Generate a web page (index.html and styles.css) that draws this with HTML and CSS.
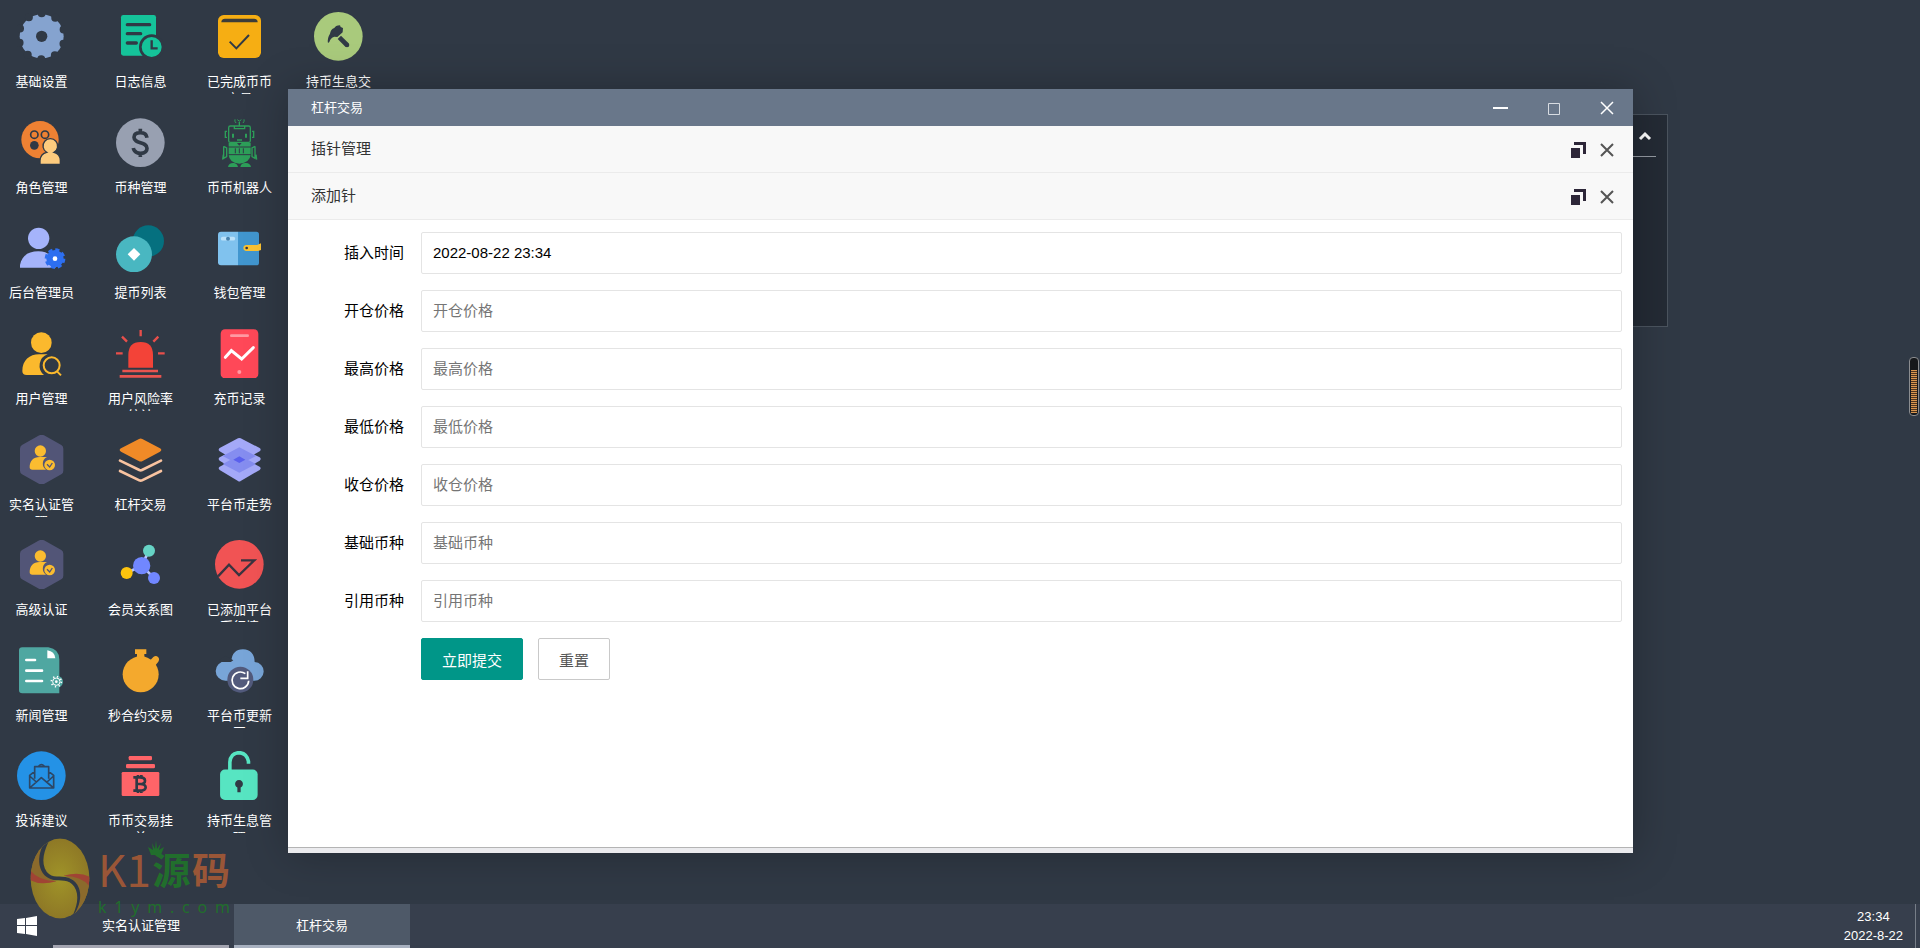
FILE: index.html
```html
<!DOCTYPE html>
<html lang="zh-CN">
<head>
<meta charset="utf-8">
<title>杠杆交易</title>
<link rel="stylesheet" href="styles.css">
</head>
<body>
<main class="desktop">
  <nav class="shortcuts">
    <a class="shortcut" href="#"><svg class="icon" viewBox="51 36 147 147"><circle cx="125" cy="109" r="66" fill="#85a3cf"/><circle cx="125" cy="109" r="69" fill="none" stroke="#303945" stroke-width="24" stroke-linecap="round" stroke-dasharray="0 43.354" transform="rotate(-90 125 109)"/><circle cx="125" cy="109" r="17" fill="#303945"/></svg><span class="caption">基础设置</span></a>
    <a class="shortcut" href="#"><svg class="icon" viewBox="51 353 147 147"><circle cx="120" cy="418" r="56" fill="#ee8133"/><g fill="none" stroke="#303945" stroke-width="5"><circle cx="103" cy="403" r="11"/><circle cx="135" cy="403" r="11"/></g><circle cx="103" cy="435" r="13" fill="#303945"/><path d="M120 492v-12q2-20 20-24a22 22 0 1 1 22 0q18 4 19 24v12z" fill="#fdcb7e" stroke="#303945" stroke-width="4"/></svg><span class="caption">角色管理</span></a>
    <a class="shortcut" href="#"><svg class="icon" viewBox="51 40 147 147"><circle cx="116" cy="86" r="32" fill="#a5b4fb"/><path d="M60 174v-8c5-28 25-41 55-41 28 0 45 14 52 49z" fill="#a5b4fb"/><circle cx="165" cy="147" r="26" fill="#2d6ff0"/><circle cx="165" cy="147" r="26" fill="none" stroke="#2d6ff0" stroke-width="10" stroke-dasharray="12 8.42"/><circle cx="165" cy="147" r="7" fill="#fff"/></svg><span class="caption">后台管理员</span></a>
    <a class="shortcut" href="#"><svg class="icon" viewBox="51 356 147 147"><circle cx="124" cy="397" r="31" fill="#fbb92d"/><path d="M67 482c0-32 22-50 50-50h26a36 36 0 0 0-11 62H80q-13 0-13-12z" fill="#fbb92d"/><circle cx="155" cy="465" r="24" fill="none" stroke="#fbb92d" stroke-width="6"/><path d="M171 483l12 12" stroke="#fbb92d" stroke-width="6"/></svg><span class="caption">用户管理</span></a>
    <a class="shortcut" href="#"><svg class="icon" viewBox="51 43 147 147"><path id="hex" d="M118 44q7-4 14 0l52 29q6 4 6 11v66q0 7-6 11l-52 29q-7 4-14 0l-52-29q-6-4-6-11V84q0-7 6-11z" fill="#525577"/><circle cx="121" cy="91" r="17" fill="#fbbc30"/><path d="M89 140c0-20 11-31 30-31h22a22 22 0 0 0-3 38H97q-8 0-8-7z" fill="#fbbc30"/><circle cx="149" cy="133" r="16" fill="#fbbc30"/><path d="M141 131l8 8 8-12" fill="none" stroke="#525577" stroke-width="4"/></svg><span class="caption">实名认证管理</span></a>
    <a class="shortcut" href="#"><svg class="icon" viewBox="51 43 147 147"><use href="#hex"/><circle cx="121" cy="91" r="17" fill="#fbbc30"/><path d="M89 140c0-20 11-31 30-31h22a22 22 0 0 0-3 38H97q-8 0-8-7z" fill="#fbbc30"/><circle cx="149" cy="133" r="16" fill="#fbbc30"/><path d="M141 131l8 8 8-12" fill="none" stroke="#525577" stroke-width="4"/></svg><span class="caption">高级认证</span></a>
    <a class="shortcut" href="#"><svg class="icon" viewBox="51 47 147 147"><path d="M67 51h78q33 5 33 37v101H67q-10 0-10-10V61q0-10 10-10z" fill="#4fa7a1"/><path d="M142 60q22 3 24 24h-24z" fill="#fff"/><path d="M79 89h26M79 121h47M79 152h47" stroke="#fff" stroke-width="8" stroke-linecap="round"/><circle cx="171" cy="154" r="18" fill="#4fa7a1"/><circle cx="169" cy="154" r="11" fill="none" stroke="#fff" stroke-width="3"/><circle cx="169" cy="154" r="15" fill="none" stroke="#fff" stroke-width="5" stroke-dasharray="4 7.78"/><circle cx="169" cy="154" r="4" fill="#fff"/></svg><span class="caption">新闻管理</span></a>
    <a class="shortcut" href="#"><svg class="icon" viewBox="51 363 147 147"><circle cx="124" cy="437" r="73" fill="#2492e6"/><g fill="none" stroke="#2d4765" stroke-width="5" stroke-linejoin="round"><path d="M104 424l-15 12v38h72v-38l-15-12M104 446v-36h42v36M89 474l35-31 37 31M89 438l20 18M161 438l-20 18"/><path d="M116 409q8-10 17 0"/></g></svg><span class="caption">投诉建议</span></a>

    <a class="shortcut" href="#"><svg class="icon" viewBox="348 36 147 147"><rect x="363" y="45" width="105" height="122" rx="7" fill="#15c39a"/><path d="M382 74h67M382 101h40M382 129h27" stroke="#303945" stroke-width="10" stroke-linecap="round"/><circle cx="455" cy="141" r="34" fill="#15c39a" stroke="#303945" stroke-width="8"/><path d="M455 121v24h18" fill="none" stroke="#303945" stroke-width="7"/></svg><span class="caption">日志信息</span></a>
    <a class="shortcut" href="#"><svg class="icon" viewBox="345 353 147 147"><circle cx="418" cy="427" r="73" fill="#98a0b1"/><path d="M438 412q-2-15-20-15-19 0-19 14c0 21 39 12 39 33 0 10-8 15-20 15-19 0-21-16-21-16M418 385v14M418 457v13" fill="none" stroke="#303945" stroke-width="11"/></svg><span class="caption">币种管理</span></a>
    <a class="shortcut" href="#"><svg class="icon" viewBox="348 40 147 147"><circle cx="445" cy="94" r="47" fill="#05707f"/><circle cx="402" cy="134" r="54" fill="#49b7c1"/><path d="M402 115l19 19-19 19-19-19z" fill="#fff"/></svg><span class="caption">提币列表</span></a>
    <a class="shortcut" href="#"><svg class="icon" viewBox="348 356 147 147"><path d="M385 472v-38q0-39 37-39t37 39v38z" fill="#f34338"/><path d="M422 359v19M366 379l15 15M475 379l-15 15M348 429h20M474 429h20" stroke="#e84f4b" stroke-width="7"/><path d="M367 482h107M359 498h125" stroke="#e9544f" stroke-width="8"/></svg><span class="caption">用户风险率统计</span></a>
    <a class="shortcut" href="#"><svg class="icon" viewBox="348 43 147 147"><path d="M417 55q5-3 10 0l53 28q8 5 0 10l-52 28q-6 3-12 0l-53-28q-8-5 0-10z" fill="#f08a27"/><path d="M360 120l58 28q4 2 8 0l57-28M360 151l58 28q4 2 8 0l57-28" fill="none" stroke="#f8c3a0" stroke-width="8" stroke-linecap="round"/></svg><span class="caption">杠杆交易</span></a>
    <a class="shortcut" href="#"><svg class="icon" viewBox="348 360 147 147"><path d="M380 459l45-22 22-45M425 437l37 37" fill="none" stroke="#b8c5ff" stroke-width="8"/><circle cx="447" cy="392" r="18" fill="#66d3c5"/><circle cx="425" cy="437" r="26" fill="#7187ff"/><circle cx="380" cy="459" r="18" fill="#fdc40e"/><circle cx="462" cy="474" r="18" fill="#7187ff"/></svg><span class="caption">会员关系图</span></a>
    <a class="shortcut" href="#"><svg class="icon" viewBox="348 47 147 147"><circle cx="422" cy="132" r="54" fill="#f4a92d"/><path d="M405 57h34v14h-6v14h-22V71h-6zM448 93l12-13q8-6 14 0 6 6 1 14l-11 14z" fill="#f4a92d"/></svg><span class="caption">秒合约交易</span></a>
    <a class="shortcut" href="#"><svg class="icon" viewBox="348 363 147 147"><g fill="#ff6468"><rect x="386" y="378" width="70" height="13" rx="4"/><rect x="378" y="402" width="87" height="13" rx="4"/><rect x="365" y="426" width="113" height="72" rx="4"/></g><path d="M400 442h20q15 0 15 10t-15 10h-11M420 462q17 0 17 10t-17 10h-20M410 442v40M414 435v7M424 435v7M414 484v5M424 484v5" fill="none" stroke="#303945" stroke-width="8"/></svg><span class="caption">币币交易挂单</span></a>

    <a class="shortcut" href="#"><svg class="icon" viewBox="645 36 147 147"><rect x="654" y="45" width="129" height="129" rx="17" fill="#f6ae13"/><path d="M664 67q0-11 11-11h87q11 0 11 11z" fill="#3c3d39"/><path d="M689 125l20 20 38-40" fill="none" stroke="#303945" stroke-width="6"/></svg><span class="caption">已完成币币交易</span></a>
    <a class="shortcut" href="#"><svg class="icon" viewBox="645 353 147 147"><g fill="none" stroke="#2d9f59" stroke-width="4"><rect x="686" y="377" width="65" height="49" rx="5"/><path d="M703 377v8h31v-8M718 377v-12M681 393h-5v18h5M756 393h5v18h-5M711 419h15M671 438l9 5v26l-9 5v-36M765 438l-9 5v26l9 5v-36M670 463l-2 15M768 463l2 15"/></g><path d="M705 357q-2 6 3 11M732 357q2 6-3 11M712 358q6 9 12 0" fill="none" stroke="#2d9f59" stroke-width="3"/><path d="M699 400v12M738 400v12" stroke="#2d9f59" stroke-width="6"/><path d="M686 428h25l7 8 7-8h27v35q-2 23-34 27-31-4-32-27zM684 500q2-13 18-12 10 2 12 12zM721 500q2-13 17-12 13 1 15 12z" fill="#2d9f59"/><path d="M684 440h69M684 463h69M706 444v15M718 444v15M730 444v15" stroke="#303945" stroke-width="3"/></svg><span class="caption">币币机器人</span></a>
    <a class="shortcut" href="#"><svg class="icon" viewBox="645 40 147 147"><path d="M663 66h51v101h-51q-9 0-9-9V75q0-9 9-9z" fill="#80c2ee"/><path d="M714 66h55q8 0 8 8v85q0 8-8 8h-55z" fill="#4196cf"/><path d="M783 101v20l-9 3h-35q-9-1-9-9t9-9h32z" fill="#fac232"/><circle cx="740" cy="115" r="4" fill="#334"/><path d="M668 87h32" stroke="#bce2fa" stroke-width="11" stroke-linecap="round"/><circle cx="684" cy="87" r="6" fill="#4782ae"/></svg><span class="caption">钱包管理</span></a>
    <a class="shortcut" href="#"><svg class="icon" viewBox="645 356 147 147"><rect x="662" y="357" width="113" height="147" rx="13" fill="#ff4858"/><path d="M694 376h49" stroke="#ff99a2" stroke-width="8" stroke-linecap="round"/><path d="M676 441l18-20 31 25 35-34" fill="none" stroke="#fff" stroke-width="9" stroke-linecap="round"/><circle cx="718" cy="485" r="6" fill="#ff99a2"/></svg><span class="caption">充币记录</span></a>
    <a class="shortcut" href="#"><svg class="icon" viewBox="645 43 147 147"><g fill="#a4a9f8"><path id="sheet" d="M714 109q4-2 8 0l57 29q6 5 0 10l-57 33q-4 3-8 0l-55-33q-6-5 0-10z"/><use href="#sheet" y="-28"/><use href="#sheet" y="-56"/></g><path d="M718 80l50 26-50 26-50-26zM718 104l50 26-50 26-50-26z" fill="#858df0"/><path d="M718 107l18 10-18 10-18-10z" fill="#5a60ed"/></svg><span class="caption">平台币走势</span></a>
    <a class="shortcut" href="#"><svg class="icon" viewBox="645 360 147 147"><circle cx="718" cy="433" r="73" fill="#f15354"/><path d="M654 469l33-35 30 31 46-44h-40" fill="none" stroke="#3a3440" stroke-width="7"/></svg><span class="caption">已添加平台币行情</span></a>
    <a class="shortcut" href="#"><svg class="icon" viewBox="645 47 147 147"><path d="M676 151a29 29 0 0 1 0-58h18q2-35 35-36 34 2 35 38a28 28 0 0 1-2 56z" fill="#78a5d8"/><path d="M658 88l18-12 24 14-8 5h-34z" fill="#303945"/><circle cx="721" cy="148" r="39" fill="#525a7c"/><path d="M736 130a25 25 0 1 0 10 21M743 123v21h-22" fill="none" stroke="#fff" stroke-width="5"/></svg><span class="caption">平台币更新图</span></a>
    <a class="shortcut" href="#"><svg class="icon" viewBox="645 363 147 150"><rect x="659" y="420" width="115" height="93" rx="15" fill="#57e5c2"/><path d="M689 424v-27q2-28 29-29 23 2 28 27v7" fill="none" stroke="#57e5c2" stroke-width="11"/><path d="M712 489v-14a12 12 0 1 1 10 0v14z" fill="#303945"/></svg><span class="caption">持币生息管理</span></a>

    <a class="shortcut" href="#"><svg class="icon" viewBox="942 36 147 147"><circle cx="1015" cy="109" r="73" fill="#a9ca7c"/><path d="M984 129q-3-14 6-28 2-13 13-17 3-7 17-8l2 5 7 3-1 13-16 14-9-1q-12 4-15 16z" fill="#303945"/><path d="M1018 112l23 23" stroke="#303945" stroke-width="14"/><circle cx="1041" cy="135" r="7" fill="#303945"/></svg><span class="caption">持币生息交易</span></a>
  </nav>

  <section class="side-panel"><button class="collapse" aria-label="收起"><svg viewBox="0 0 14 10"><path d="M2 8l5-5 5 5" fill="none" stroke="#fff" stroke-width="3"/></svg></button></section>

  <section class="window">
    <header class="titlebar">
      <h1 class="title">杠杆交易</h1>
      <div class="controls">
        <button class="control" aria-label="最小化"><svg viewBox="0 0 16 16"><path d="M0 8h15" stroke="#fff" stroke-width="2"/></svg></button>
        <button class="control" aria-label="最大化"><svg viewBox="0 0 16 16"><path d="M2.500 3.500h11v11h-11z" fill="none" stroke="#d8dce2"/></svg></button>
        <button class="control" aria-label="关闭"><svg viewBox="0 0 16 16"><path d="M2 2l12 12M14 2L2 14" stroke="#fff" stroke-width="1.500"/></svg></button>
      </div>
    </header>
    <div class="layer">
      <h2 class="layer-title">插针管理</h2>
      <button class="tool" aria-label="还原"><svg viewBox="0 0 16 16"><path d="M4 0h12v12h-3V3H4zM1 6h9v10H1z" fill="#2d2638"/></svg></button>
      <button class="tool" aria-label="关闭"><svg viewBox="0 0 16 16"><path d="M2 2l12 12M14 2L2 14" stroke="#555" stroke-width="2"/></svg></button>
    </div>
    <div class="layer">
      <h2 class="layer-title">添加针</h2>
      <button class="tool" aria-label="还原"><svg viewBox="0 0 16 16"><path d="M4 0h12v12h-3V3H4zM1 6h9v10H1z" fill="#2d2638"/></svg></button>
      <button class="tool" aria-label="关闭"><svg viewBox="0 0 16 16"><path d="M2 2l12 12M14 2L2 14" stroke="#555" stroke-width="2"/></svg></button>
    </div>
    <form class="form">
      <div class="row"><label class="label" for="time">插入时间</label><input class="field" id="time" type="text" value="2022-08-22 23:34"></div>
      <div class="row"><label class="label" for="open">开仓价格</label><input class="field" id="open" type="text" placeholder="开仓价格"></div>
      <div class="row"><label class="label" for="high">最高价格</label><input class="field" id="high" type="text" placeholder="最高价格"></div>
      <div class="row"><label class="label" for="low">最低价格</label><input class="field" id="low" type="text" placeholder="最低价格"></div>
      <div class="row"><label class="label" for="close">收仓价格</label><input class="field" id="close" type="text" placeholder="收仓价格"></div>
      <div class="row"><label class="label" for="base">基础币种</label><input class="field" id="base" type="text" placeholder="基础币种"></div>
      <div class="row"><label class="label" for="quote">引用币种</label><input class="field" id="quote" type="text" placeholder="引用币种"></div>
      <div class="actions"><button class="button primary" type="submit">立即提交</button><button class="button" type="reset">重置</button></div>
    </form>
  </section>

  <div class="gauge"><div class="gauge-level"></div></div>
</main>

<footer class="taskbar">
  <button class="start" aria-label="开始"><svg viewBox="0 0 20 20"><path d="M0 3l8-1v7H0zM9 2l11-2v9H9zM0 10h8v8l-8-1zM9 10h11v10L9 18z" fill="#fff"/></svg></button>
  <button class="task">实名认证管理</button>
  <button class="task active">杠杆交易</button>
  <time class="clock"><span>23:34</span><span>2022-8-22</span></time>
</footer>

<aside class="watermark">
  <svg class="emblem" viewBox="88 52 182 244">
    <defs>
      <clipPath id="egg"><ellipse cx="179" cy="174" rx="89" ry="121"/></clipPath>
      <radialGradient id="gold"><stop offset="0" stop-color="#a09428"/><stop offset="1" stop-color="#8e7826"/></radialGradient>
    </defs>
    <g clip-path="url(#egg)">
      <path d="M88 52h182v244H88z" fill="url(#gold)"/>
      <path d="M143 60C95 90 84 130 88 168q34 22 80 14-52-14-50-64 2-32 26-58z" fill="#8b6a2c"/>
      <path d="M215 288c48-30 59-70 55-108q-34-22-80-14 52 14 50 64-2 32-26 58z" fill="#8b6a2c"/>
      <path d="M89 150q26 32 79 32-46 14-79-3z" fill="#a04434"/>
      <path d="M269 198q-26-32-79-32 46-14 79 3z" fill="#a04434"/>
      <path d="M142 52c-36 40-38 110 14 126 26 5 49-3 66 20 18 28 8 64-9 98 34-40 42-104-8-124-26-9-49 3-66-18-20-28-8-68 11-102z" fill="#303945"/>
    </g>
  </svg>
  <div class="brand">
    <div class="brand-name"><span class="latin">K1</span><span class="yuan">源</span><span class="ma">码</span></div>
    <div class="brand-site"><span>k</span><span>1</span><span>y</span><span>m</span><span>.</span><span>c</span><span>o</span><span>m</span></div>
  </div>
  <svg class="crown" viewBox="0 0 16 16"><path d="M3 15L0 7l5 3-1-7 3 6 1-9 1 9 4-6-2 7 5-3-3 8z" fill="#216e2c"/></svg>
</aside>
</body>
</html>
```
FILE: styles.css
```css
* { box-sizing: border-box; }
body {
  margin: 0;
  height: 100vh;
  display: flex;
  flex-direction: column;
  overflow: hidden;
  background: #303945;
  color: #fff;
  font-family: "Liberation Sans", "Noto Sans CJK SC", sans-serif;
  font-size: 13px;
}
button {
  margin: 0;
  padding: 0;
  border: 0;
  background: none;
  color: inherit;
  font: inherit;
}
h1, h2 { margin: 0; font-weight: 400; }
svg { display: block; }

.desktop { position: relative; flex: 1; min-height: 0; }
.shortcuts {
  height: 100%;
  padding-bottom: 59px;
  display: grid;
  grid-auto-flow: column;
  grid-template-rows: repeat(8, minmax(0, 1fr));
  grid-auto-columns: 83px;
  column-gap: 16px;
}
.shortcut {
  display: flex;
  flex-direction: column;
  align-items: center;
  gap: 12px;
  padding-top: 12px;
  color: #fff;
  text-decoration: none;
}
.icon { width: 49px; height: 49px; flex: none; }
.caption {
  width: 70px;
  height: 21px;
  overflow: hidden;
  line-height: 17px;
  text-align: center;
}

.side-panel {
  position: absolute;
  top: 114px;
  right: 252px;
  width: 300px;
  height: 213px;
  padding: 0 11px;
  border: 1px solid #4b545f;
  background: #242b35;
}
.collapse {
  display: flex;
  align-items: center;
  justify-content: flex-end;
  width: 100%;
  height: 42px;
  padding-right: 4px;
  border-bottom: 1px solid #959ba3;
}
.collapse svg { width: 14px; height: 10px; }

.window {
  position: absolute;
  top: 89px;
  right: 287px;
  bottom: 51px;
  left: 288px;
  display: flex;
  flex-direction: column;
  background: #fff;
  border-bottom: 5px solid #ebebee;
  box-shadow: 1px 1px 40px rgba(0, 0, 0, 0.25);
}
.titlebar {
  display: flex;
  align-items: center;
  justify-content: space-between;
  height: 37px;
  padding-left: 23px;
  background: #69778a;
}
.title { padding-bottom: 2px; font-size: 13px; }
.controls { display: flex; }
.control { width: 53px; height: 37px; display: grid; place-items: center; }
.control svg { width: 16px; height: 16px; }
.layer {
  display: flex;
  align-items: center;
  height: 47px;
  padding: 0 18px 0 23px;
  border-bottom: 1px solid #ebebeb;
  background: #f8f8f8;
  color: #333;
}
.layer-title { flex: 1; padding-bottom: 3px; font-size: 15px; }
.tool { margin-left: 13px; padding-top: 2px; }
.tool svg { width: 16px; height: 16px; }

.form {
  flex: 1;
  display: flex;
  flex-direction: column;
  gap: 16px;
  padding: 12px 11px 0 0;
  border-bottom: 1px solid #b4b4b4;
  color: #000;
  font-size: 15px;
}
.row { display: flex; align-items: center; }
.label { width: 133px; padding: 0 17px 3px 0; text-align: right; }
.field {
  flex: 1;
  height: 42px;
  padding: 0 11px 2px;
  border: 1px solid #e4e4e4;
  border-radius: 2px;
  background: #fff;
  color: #000;
  font: inherit;
}
.field::placeholder { color: #757575; }
.actions { display: flex; gap: 15px; padding-left: 133px; }
.button {
  height: 42px;
  padding: 0 20px;
  border: 1px solid #c9c9c9;
  border-radius: 2px;
  color: #555;
}
.primary { border-color: #009688; background: #009688; color: #fff; }

.gauge {
  position: absolute;
  top: 357px;
  right: 1px;
  width: 10px;
  height: 59px;
  padding: 12px 1px 2px;
  border: 1px solid #8b8d90;
  border-radius: 4px;
  background: #16181b;
}
.gauge-level {
  height: 100%;
  background: repeating-linear-gradient(#d9964f 0 1px, #4d3520 1px 2px);
}

.taskbar {
  display: flex;
  gap: 5px;
  height: 44px;
  background: #373f4d;
}
.start { width: 48px; padding-left: 17px; }
.start svg { width: 20px; height: 20px; }
.task { width: 176px; border-bottom: 3px solid #a3a4b0; }
.active { background: #4e5968; border-color: #a8b1c0; }
.clock {
  display: flex;
  flex-direction: column;
  align-items: center;
  justify-content: center;
  margin: 0 4px 0 auto;
  padding: 0 12px 0 11px;
  border-right: 1px solid #777e88;
  line-height: 19px;
}

.watermark {
  position: absolute;
  left: 30px;
  bottom: 29px;
  display: flex;
  gap: 8px;
  pointer-events: none;
}
.emblem { width: 60px; height: 81px; }
.brand { width: 132px; height: 81px; }
.brand-name {
  display: flex;
  align-items: center;
  justify-content: space-between;
  height: 60px;
  font-family: "Noto Sans CJK SC", sans-serif;
  font-size: 38px;
  line-height: 56px;
}
.latin { color: #9a5637; font-size: 44px; font-weight: 400; }
.yuan { color: #216e2c; font-weight: 700; }
.ma { color: #9a5637; font-weight: 700; }
.brand-site {
  display: flex;
  justify-content: space-between;
  color: #216e2c;
  font-family: "Noto Sans", sans-serif;
  font-size: 16px;
  line-height: 18px;
}
.crown { position: absolute; top: 2px; left: 118px; width: 16px; height: 16px; }
```
